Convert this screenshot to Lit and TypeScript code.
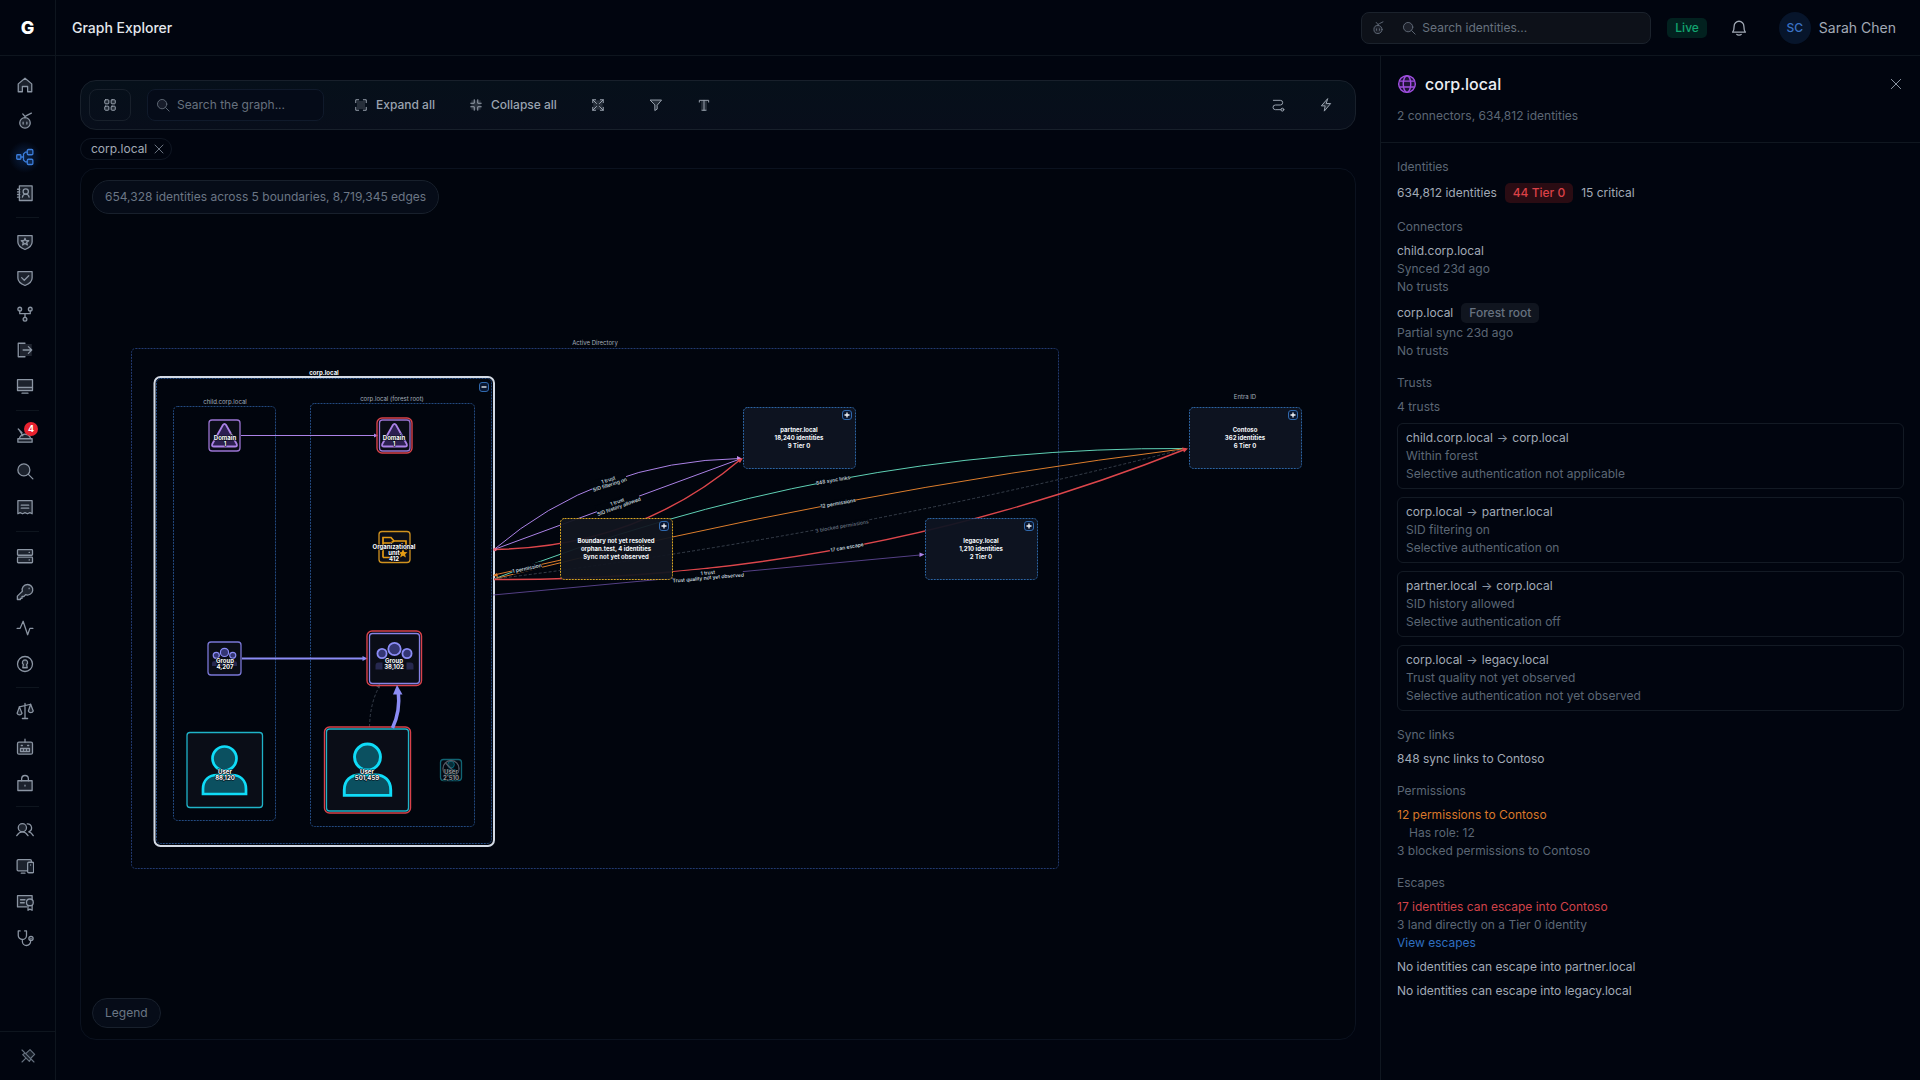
import { LitElement, html, css, svg, nothing } from "lit";
import { customElement, property } from "lit/decorators.js";

/* ---------- icon set: 24-unit grid, outline plus a soft inner tint ---------- */
const ICONS: Record<string, unknown> = {
  home: svg`<path class="t" d="M3 21V10.5L12 3l9 7.5V21h-5.5v-7h-7v7z"/>`,
  bot: svg`<circle class="t" cx="12" cy="14.5" r="7"/><path d="M12 7.5V6M9 2.5l3 3.5 2.5-1.5L20.5 1.5M9.5 13.5v2.5M14.5 13.5v2.5"/>`,
  graph: svg`<rect class="t" x="1" y="9" width="5.5" height="6" rx="1"/><rect class="t" x="15" y="2" width="7.5" height="7" rx="1.5"/><rect class="t" x="15" y="15" width="7.5" height="7" rx="1.5"/><path d="M6.5 12H10M15 5.500h-2.500L10 8v8l2.500 2.500H15"/>`,
  contacts: svg`<rect class="t" x="4.5" y="2.5" width="17" height="19.5"/><circle cx="13" cy="10" r="3.5"/><path d="M8.500 17.500c.500-2.500 2-4 4.500-4s4 1.500 4.500 4M2 7h3M2 10.500h3M2 14h3M2 17.500h3"/>`,
  shieldStar: svg`<path class="t" d="M2.500 3.500h19V12c0 5-4.500 8-9.500 10-5-2-9.500-5-9.500-10z"/><path d="m12 7 1.300 3.300H17l-2.800 2.200 1 3.500-3.200-2.200L8.800 16l1-3.500L7 10.300h3.700z"/>`,
  shieldCheck: svg`<path class="t" d="M2.500 3.500h19V12c0 5-4.500 8-9.500 10-5-2-9.500-5-9.500-10z"/><path d="m7.500 11.500 3.500 3.500 6-6"/>`,
  fork: svg`<circle class="t" cx="5" cy="5.500" r="2.500"/><circle class="t" cx="19" cy="5.500" r="2.500"/><circle class="t" cx="12" cy="19" r="2.500"/><path d="M5 8v3.500h14V8M12 11.500v5"/>`,
  exit: svg`<path d="M12 3H3v18h9"/><path class="f" d="M5 4h16v16H5z"/><path d="M9.500 12H21M16.500 7.500 21 12l-4.500 4.500"/>`,
  monitor: svg`<path class="t" d="M2 3.500h20V18H2z"/><path d="M2 14h20M8 21.500h8"/>`,
  siren: svg`<path class="t" d="M5 17V15a8 8 0 0 1 14 0v2M2.500 17h19v4.500h-19z"/><path d="M8 9 3 4M4.500 5.500 9 13"/>`,
  search: svg`<circle class="t" cx="10.500" cy="10.500" r="8"/><path d="m16.500 16.500 6 6"/>`,
  receipt: svg`<path class="t" d="M2.500 3.500h19V21l-3-1.500-3.250 1.500L12 19.500 8.750 21l-3.250-1.500-3 1.500z"/><path d="M7 9.500h10M7 13.500h10"/>`,
  server: svg`<rect class="t" x="2" y="3.500" width="20" height="7.500" rx="1"/><rect class="t" x="2" y="13.500" width="20" height="7.500" rx="1"/><path d="M17.500 7.200h.500M17.500 17.200h.500"/>`,
  key: svg`<path class="t" d="M15 2a7 7 0 1 1-2.200 13.500L10.500 18H8v2.500H6V22H1.800v-4.500L8.500 11A7 7 0 0 1 15 2z"/><path d="M17.500 7v.500"/>`,
  pulse: svg`<path d="M1.500 12.500h4L9.500 3l6 18 3-8.500h4"/>`,
  keyhole: svg`<circle cx="12" cy="12" r="10"/><path class="t" d="M12 6.500a3.500 3.500 0 0 1 2.200 6.200L15 17H9l.8-4.300A3.500 3.500 0 0 1 12 6.500z"/>`,
  scales: svg`<path d="M12 2v20M8.500 22h7M4.500 6.500 19.500 3"/><path class="t" d="M4.500 6.500 1.500 15a3.500 3.500 0 0 0 6.500 0zM19.500 3l-3 9a3.500 3.500 0 0 0 6.500 0z"/>`,
  robot: svg`<rect class="t" x="2" y="5.500" width="20" height="16" rx="2"/><path d="M12 5.500V1.500M7 10h1.500M15.500 10H17M6 14h12v4H6zM10 14v4M14 14v4"/>`,
  lock: svg`<rect class="t" x="2.500" y="9" width="19" height="13"/><path d="M7.500 9V6.500a4.500 4.500 0 0 1 9 0V9M12 15v1"/>`,
  users: svg`<circle class="t" cx="8.500" cy="9" r="5.500"/><path d="M1 19.500c2-3 4.500-5 7.500-5s5.500 2 7.500 5M15 3.800a5.500 5.500 0 0 1 2 10.700c2.500.500 4.500 2.500 6 5"/>`,
  devices: svg`<rect class="t" x="1.500" y="3.500" width="19" height="15" rx="1.500"/><path d="M7 21.500h5"/><rect class="k" x="15.500" y="7" width="8" height="14" rx="1.500"/><path d="M19.500 10.500v.200"/>`,
  certificate: svg`<path class="t" d="M14 18.500H2v-15h19.500V8"/><circle class="k" cx="18.500" cy="12.500" r="4.500"/><path d="M16 16.500V23l2.500-1.500L21.500 23v-6.500M6 9h6M6 13h5"/>`,
  steth: svg`<path d="M5.500 2.500H3v6a5.500 5.500 0 0 0 11 0v-6h-2.500M8.500 14v2.500a5.500 5.500 0 0 0 11 0V15"/><circle class="t" cx="20" cy="12.500" r="2.800"/><path d="M20 12.400v.200"/>`,
  pinOff: svg`<path class="t" d="m9 8 6-5.500 7 7L16.500 15M7 8l-3 2 10 10 2-3"/><path d="M3 3l18 18M8.500 15.500 3 21"/>`,
  bell: svg`<path d="M3.500 17.500c1.500-2 2-4 2-8a6.500 6.500 0 0 1 13 0c0 4 .500 6 2 8z"/><path d="M9 20.500c1 1.200 5 1.200 6 0"/>`,
  grid: svg`<rect class="t" x="3" y="3" width="7" height="7" rx="1.500"/><rect class="t" x="14" y="3" width="7" height="7" rx="1.500"/><rect class="t" x="3" y="14" width="7" height="7" rx="1.500"/><rect class="t" x="14" y="14" width="7" height="7" rx="1.500"/>`,
  expand: svg`<path class="f" d="M5 5h14v14H5z"/><path d="M3 8V3h5M16 3h5v5M21 16v5h-5M8 21H3v-5"/>`,
  collapse: svg`<path class="f" d="M4 4h16v16H4z"/><path d="M9 3v6H3M15 3v6h6M21 15h-6v6M3 15h6v6"/>`,
  fit: svg`<path class="f" d="M4 4h16v16H4z"/><path d="M3 8V3h5M16 3h5v5M21 16v5h-5M8 21H3v-5M3 3l6.500 6.500M21 3l-6.500 6.500M21 21l-6.500-6.500M3 21l6.500-6.500"/>`,
  filter: svg`<path class="t" d="M2.500 3.500h19L14 12.500V19l-4 2.500v-9z"/>`,
  type: svg`<path class="f" d="M7 4h10v17H7z"/><path d="M4 7V4h16v3M12 4v17M8.500 21h7"/>`,
  route: svg`<path d="M4 4h12a4 4 0 0 1 0 8H7.500a4 4 0 0 0 0 8H17"/><circle class="t" cx="19.500" cy="20" r="2.500"/>`,
  bolt: svg`<path class="t" d="M14.500 1.500 4 13.500h6.500l-1.500 9 11-13H13z"/>`,
  close: svg`<path d="M4 4l16 16M20 4 4 20"/>`,
  globe: svg`<circle class="t" cx="12" cy="12" r="10"/><ellipse cx="12" cy="12" rx="4.500" ry="10"/><path d="M3.500 8.500h17M3.500 15.500h17"/>`,
};

@customElement("ui-icon")
export class UiIcon extends LitElement {
  @property() name = "";
  @property({ type: Number }) size = 18;
  static styles = css`
    :host { display: inline-flex; flex: none; }
    svg { display: block; fill: none; stroke: currentColor; stroke-width: 1.7; stroke-linecap: round; stroke-linejoin: round; }
    .t { fill: currentColor; fill-opacity: 0.2; }
    .f { fill: currentColor; fill-opacity: 0.22; stroke: none; }
    .k { fill: #151c28; }
  `;
  render() {
    return html`<svg width=${this.size} height=${this.size} viewBox="0 0 24 24" aria-hidden="true">${ICONS[this.name] ?? nothing}</svg>`;
  }
}

/* ---------- navigation rail ---------- */
const NAV: { tight?: boolean; items: [string, string][] }[] = [
  { items: [["home", "Home"], ["bot", "Assistant"], ["graph", "Graph Explorer"], ["contacts", "Identities"]] },
  { items: [["shieldStar", "Tier 0"], ["shieldCheck", "Posture"], ["fork", "Attack paths"], ["exit", "Escapes"], ["monitor", "Hosts"]] },
  { items: [["siren", "Alerts"], ["search", "Hunt"], ["receipt", "Reports"]] },
  { items: [["server", "Connectors"], ["key", "Credentials"], ["pulse", "Activity"], ["keyhole", "Access"]] },
  { tight: true, items: [["scales", "Policies"], ["robot", "Automation"], ["lock", "Secrets"]] },
  { tight: true, items: [["users", "Users"], ["devices", "Devices"], ["certificate", "Licences"], ["steth", "Health"]] },
];

@customElement("nav-rail")
export class NavRail extends LitElement {
  static styles = css`
    :host { display: flex; flex-direction: column; border-right: 1px solid #0e151e; box-sizing: border-box; }
    nav { flex: 1; padding: 13px 8px 8px; }
    ul { list-style: none; margin: 0; padding: 0; display: flex; flex-direction: column; gap: 4px; }
    .sep { border: 0; height: 1px; background: #0e151e; margin: 8px; }
    .sep.tight { margin: 7px 8px; }
    a { display: flex; align-items: center; height: 32px; padding: 0 8px; color: #8b95a3; border-radius: 6px; position: relative; }
    a.on { color: #3b7ddb; background: radial-gradient(circle at 17px 16px, #0a2145 0, #04102400 16px); }
    .badge { position: absolute; left: 16px; top: 3px; width: 14px; height: 14px; border-radius: 7px; background: #e7222f; color: #fff; font-size: 9px; font-weight: 700; line-height: 14px; text-align: center; }
    .foot { height: 48px; border-top: 1px solid #0e151e; display: flex; align-items: center; justify-content: center; }
    button { all: unset; color: #66717f; display: flex; }
  `;
  render() {
    return html`
      <nav aria-label="Main">
        ${NAV.map((g, i) => html`
          ${i ? html`<hr class="sep ${g.tight ? "tight" : ""}" />` : nothing}
          <ul>
            ${g.items.map(([icon, label]) => html`<li>
              <a href="#${icon}" aria-label=${label} class=${icon === "graph" ? "on" : ""}>
                <ui-icon name=${icon}></ui-icon>
                ${icon === "siren" ? html`<span class="badge">4</span>` : nothing}
              </a></li>`)}
          </ul>`)}
      </nav>
      <div class="foot"><button aria-label="Pin sidebar"><ui-icon name="pinOff" size="16"></ui-icon></button></div>
    `;
  }
}

/* ---------- graph canvas ---------- */
interface Boundary { x: number; y: number; lines: string[]; warn?: boolean }
const BOUNDARIES: Boundary[] = [
  { x: 743, y: 407, lines: ["partner.local", "18,240 identities", "9 Tier 0"] },
  { x: 560, y: 518, lines: ["Boundary not yet resolved", "orphan.test, 4 identities", "Sync not yet observed"], warn: true },
  { x: 1189, y: 407, lines: ["Contoso", "362 identities", "6 Tier 0"] },
  { x: 925, y: 518, lines: ["legacy.local", "1,210 identities", "2 Tier 0"] },
];

interface EdgeLabel { x: number; y: number; r: number; lines: string[]; w: number; dim?: boolean }
const EDGE_LABELS: EdgeLabel[] = [
  { x: 609, y: 482, r: -18, lines: ["1 trust", "SID filtering on"], w: 36 },
  { x: 618, y: 504, r: -20, lines: ["1 trust", "SID history allowed"], w: 45 },
  { x: 527, y: 568, r: -12, lines: ["1 permission"], w: 30 },
  { x: 833, y: 480, r: -10, lines: ["848 sync links"], w: 34 },
  { x: 838, y: 503, r: -10, lines: ["12 permissions"], w: 35 },
  { x: 842, y: 526, r: -10, lines: ["3 blocked permissions"], w: 52, dim: true },
  { x: 847, y: 547, r: -10, lines: ["17 can escape"], w: 35 },
  { x: 708, y: 575, r: -5, lines: ["1 trust", "Trust quality not yet observed"], w: 70 },
];

@customElement("graph-canvas")
export class GraphCanvas extends LitElement {
  static styles = css`
    :host { display: flex; flex-direction: column; justify-content: space-between; align-items: flex-start; position: relative; box-sizing: border-box; min-height: 480px; padding: 11px; border: 1px solid #0b121f; border-radius: 16px; background: #01050d; overflow: hidden; }
    .stage { position: absolute; inset: 0; width: 100%; height: 100%; font-family: Inter, "Liberation Sans", sans-serif; }
    .pill { position: relative; font: 400 12px/18px Inter, "Liberation Sans", sans-serif; color: #6b7685; background: #060c18; border: 1px solid #18202c; border-radius: 17px; padding: 7px 12px; margin: 0; }
    button.pill { padding: 5px 12px; border-radius: 15px; cursor: pointer; }
    text { text-anchor: middle; dominant-baseline: central; font-size: 6px; }
    .cap { fill: #a3adbb; }
    .strong { fill: #f4f7fb; font-weight: 700; }
    .node { fill: #fbfcfe; font-weight: 700; paint-order: stroke; stroke: #050910; stroke-width: 1.2px; stroke-linejoin: round; }
    .edge-label { font-size: 5px; font-weight: 500; fill: #dfe4ec; }
    .edge-label.dim { fill: #6b7583; }
    .lb { fill: #01050d; }
    .dash { fill: none; stroke: #234a80; stroke-width: 1; stroke-dasharray: 2 1; }
    .dash.far { stroke: #223a70; }
    .box { fill: #0e1422; fill-opacity: 0.94; stroke: #2c64a2; stroke-width: 1; stroke-dasharray: 2 1; }
    .box.warn { stroke: #d6a422; fill: #111520; }
    .e { fill: none; stroke-width: 1; }
    .violet { stroke: #ab82e6; } .violet.thin { stroke: #6a4fa5; stroke-width: 0.8; }
    .indigo { stroke: #8b8cf5; }
    .indigo.wide { stroke-width: 2; }
    .red { stroke: #dc464b; stroke-width: 1.4; }
    .teal { stroke: #5fd0b4; }
    .orange { stroke: #dc7d2c; }
    .grey { stroke: #424b58; stroke-dasharray: 3 2; stroke-width: 0.8; }
    .card { fill: #0a0d17; stroke-width: 1.3; }
    .ring { fill: none; stroke: #d8424a; stroke-width: 1.4; }
    .toggle { all: unset; box-sizing: border-box; display: block; width: 10px; height: 10px; border: 1px solid #3069ad; border-radius: 3px; background: #0a1730; cursor: pointer; }
    .toggle svg { display: block; width: 8px; height: 8px; stroke: #f4f7fb; stroke-width: 1.3; }
  `;

  private toggle(x: number, y: number, label: string, open = false) {
    return svg`<foreignObject x=${x} y=${y} width="10" height="10">
      <button class="toggle" xmlns="http://www.w3.org/1999/xhtml" aria-label=${label}>
        <svg viewBox="0 0 8 8" xmlns="http://www.w3.org/2000/svg"><path d=${open ? "M1.500 4h5" : "M1.500 4h5M4 1.500v5"}/></svg>
      </button></foreignObject>`;
  }

  private boundary(b: Boundary) {
    return svg`<rect class="box ${b.warn ? "warn" : ""}" x=${b.x + 0.5} y=${b.y + 0.5} width="112" height="61" rx="4"/>
      ${b.lines.map((t, i) => svg`<text class="strong" x=${b.x + 56} y=${b.y + 22 + i * 8}>${t}</text>`)}
      ${this.toggle(b.x + 99, b.y + 3, `Expand ${b.lines[0]}`)}`;
  }

  private edgeLabel(l: EdgeLabel) {
    const n = l.lines.length;
    return svg`<g transform="rotate(${l.r} ${l.x} ${l.y})">
      <rect class="lb" x=${l.x - l.w / 2} y=${l.y - n * 2.5 - 1} width=${l.w} height=${n * 5 + 2}/>
      ${l.lines.map((t, i) => svg`<text class="edge-label ${l.dim ? "dim" : ""}" x=${l.x} y=${l.y - (n - 1) * 2.5 + i * 5}>${t}</text>`)}
    </g>`;
  }

  private labels(x: number, y: number, lines: string[]) {
    return lines.map((t, i) => svg`<text class="node" x=${x} y=${y + i * 6}>${t}</text>`);
  }

  private triangle(x: number, y: number) {
    return svg`<path d="M${x - 1.6} ${y - 10.5}q1.600 -2.400 3.200 0L${x + 12.2} ${y + 8.5}q1 2.500 -1.700 2.500H${x - 10.5}q-2.700 0 -1.700 -2.500z" fill="#2c2050" stroke="#ab82e6" stroke-width="1.800"/>`;
  }

  private person(x: number, y: number, k: number) {
    return svg`<g transform="translate(${x} ${y}) scale(${k})" fill="#0b5060" stroke="#0fdcf8" stroke-width="2.700">
      <circle cx="0" cy="-12" r="12"/><path d="M-21.500 23.500v-5c0-9 6-14 14-14h15c8 0 14 5 14 14v5z"/></g>`;
  }

  private crowd(x: number, y: number, k: number) {
    return svg`<g transform="translate(${x} ${y}) scale(${k})">
      <path d="M-19 12v-4q0-3 3-3h4v7zM19 12v-4q0-3-3-3h-4v7zM-9 12V9q0-5 5-5h8q5 0 5 5v3z" fill="#26284f"/>
      <g fill="#343673" stroke="#8b8cf5" stroke-width="1.800"><circle cx="-12.500" cy="-4" r="4.600"/><circle cx="12.500" cy="-4" r="4.600"/><circle cx="0" cy="-8.500" r="6.200"/></g></g>`;
  }

  render() {
    return html`
      <svg class="stage" viewBox="81 169 1274 870" role="img" aria-label="Identity graph">
        <rect class="dash far" x="131.500" y="348.500" width="927" height="520" rx="4"/>
        <text class="cap" x="595" y="342">Active Directory</text>
        <text class="cap" x="1245" y="396">Entra ID</text>

        <rect x="154.500" y="377" width="339.500" height="469" rx="6" fill="none" stroke="#d3dae4" stroke-width="2"/>
        <rect class="dash" x="156.500" y="378.500" width="335" height="465" rx="4"/>
        <text class="strong" x="324" y="372">corp.local</text>
        <rect class="dash" x="173.500" y="406.500" width="102" height="414" rx="4"/>
        <text class="cap" x="225" y="401">child.corp.local</text>
        <rect class="dash" x="310.500" y="403.500" width="164" height="423" rx="4"/>
        <text class="cap" x="392" y="398">corp.local (forest root)</text>
        ${this.toggle(479, 382, "Collapse corp.local", true)}

        <path class="e violet" d="M494 549.500Q598 461 740 458.500"/>
        <path class="e violet" d="M494 549.500L740 459"/>
        <path class="e red" d="M494 549.500Q638 547 741 459"/>
        <path class="e teal" d="M494 579Q829 446.500 1186 448.500"/>
        <path class="e orange" d="M494 579Q837 492.500 1186 448.500"/>
        <path class="e orange" d="M494 575L561 560"/>
        <path class="e grey" d="M494 579Q845 536 1186 448.500"/>
        <path class="e red" d="M494 579.500Q853 581 1186 449"/>
        <path class="e violet thin" d="M493 595L920 555"/>
        <path d="M742 458.500l-5-2.500v4z" fill="#c489e8"/>
        <path d="M743 458l-6 1.500 3 3.500z" fill="#e0484e"/>
        <path d="M1188 448.500l-6-1 2 5z" fill="#e0484e"/>
        <path d="M924.500 554.500l-5-2v4.500z" fill="#ab82e6"/>
        <circle cx="495" cy="549.500" r="1.800" fill="#e5687e"/>
        <path d="M493 575.500l4-2.500 1 4z" fill="#e08030"/>
        ${EDGE_LABELS.map((l) => this.edgeLabel(l))}
        ${BOUNDARIES.map((b) => this.boundary(b))}

        <path class="e violet" d="M241 435.500H374"/>
        <path d="M378 435.500l-4-2v4z" fill="#ab82e6"/>
        <path class="e indigo wide" d="M242 658.500H363"/>
        <path d="M367.500 658.500l-5-2.500v5z" fill="#8b8cf5"/>
        <path class="e grey" d="M369.500 727Q370 703 379.500 686"/>
        <path d="M380 684l-4 2 3.500 2.500z" fill="#424b58"/>

        <rect class="card" x="209" y="420" width="31" height="31" rx="3" stroke="#9a74d2"/>
        ${this.triangle(224.5, 435.5)}${this.labels(225, 437, ["Domain", "1"])}
        <rect class="ring" x="377" y="418" width="35" height="35" rx="5"/>
        <rect class="card" x="379.500" y="420" width="30.500" height="31" rx="3" stroke="#9a74d2"/>
        ${this.triangle(394.5, 435.5)}${this.labels(394, 437, ["Domain", "1"])}

        <rect class="card" x="379" y="531.500" width="31" height="31" rx="3" stroke="#d0921f"/>
        <path d="M383 557.500v-20h8l3 3.500h12v9M383 557.500h15M383 543h8l3-2" fill="none" stroke="#e39a14" stroke-width="1.700"/>
        <path d="m403 549 1.300 3 3.200.3-2.400 2 .8 3.200-2.900-1.700-2.900 1.700.8-3.200-2.400-2 3.200-.3z" fill="#e39a14"/>
        ${this.labels(394, 546, ["Organizational", "unit", "412"])}

        <rect class="card" x="208" y="642" width="33" height="33" rx="3" stroke="#7a77d6"/>
        ${this.crowd(224.5, 658, 0.66)}${this.labels(225, 660, ["Group", "4,207"])}
        <rect class="ring" x="367" y="631" width="54.500" height="54.500" rx="5"/>
        <rect class="card" x="369.500" y="633.500" width="50" height="50" rx="3" stroke="#8683e6"/>
        ${this.crowd(394.5, 657.5, 1)}${this.labels(394, 660, ["Group", "38,102"])}

        <rect class="card" x="187" y="732.500" width="75.500" height="75" rx="3" stroke="#1fb3c8"/>
        ${this.person(224.5, 770.5, 1)}${this.labels(225, 771, ["User", "88,120"])}
        <rect class="ring" x="324.500" y="727" width="86" height="86" rx="5"/>
        <rect class="card" x="326.500" y="729" width="82" height="82" rx="3" stroke="#1fb3c8"/>
        ${this.person(367.5, 770, 1.08)}${this.labels(367, 771, ["User", "501,459"])}
        <path d="M392.500 728Q400.500 711 398.300 692" fill="none" stroke="#8b8cf5" stroke-width="3.500"/>
        <path d="M397 685l-4 9.500h9.500z" fill="#8b8cf5"/>

        <g opacity="0.550">
          <rect class="card" x="440.500" y="759.500" width="21" height="21" rx="3" stroke="#1fb3c8"/>
          ${this.person(451, 768, 0.28)}
          <circle cx="451" cy="768.500" r="8" fill="none" stroke="#9aa3b0" stroke-width="1.300"/>
          <path d="M445.500 763l11 11" stroke="#9aa3b0" stroke-width="1.300"/>
          ${this.labels(451, 771, ["User", "2,510"])}
        </g>
      </svg>
      <p class="pill">654,328 identities across 5 boundaries, 8,719,345 edges</p>
      <button class="pill">Legend</button>
    `;
  }
}

/* ---------- detail panel ---------- */
const TRUSTS = [
  ["child.corp.local", "corp.local", "Within forest", "Selective authentication not applicable"],
  ["corp.local", "partner.local", "SID filtering on", "Selective authentication on"],
  ["partner.local", "corp.local", "SID history allowed", "Selective authentication off"],
  ["corp.local", "legacy.local", "Trust quality not yet observed", "Selective authentication not yet observed"],
];

@customElement("detail-panel")
export class DetailPanel extends LitElement {
  static styles = css`
    :host { display: block; box-sizing: border-box; border-left: 1px solid #101720; font-size: 12px; line-height: 18px; color: #a2aab6; }
    header { padding: 16px 15px 16px 16px; height: 87px; box-sizing: border-box; border-bottom: 1px solid #101720; }
    .title { display: flex; align-items: center; gap: 8px; height: 24px; color: #a04fe0; }
    h2 { margin: 0; flex: 1; font-size: 16px; line-height: 24px; font-weight: 500; color: #eceff4; }
    button { all: unset; display: flex; color: #8b95a3; padding: 2px; cursor: pointer; }
    p { margin: 0; }
    .sub { margin-top: 11px; }
    .sub, .m { color: #5c6775; }
    .body { padding: 15px 16px; display: flex; flex-direction: column; gap: 14px; }
    section { display: flex; flex-direction: column; gap: 6px; }
    h3 { margin: 0; font-size: 12px; line-height: 18px; font-weight: 400; color: #5c6775; }
    .row { display: flex; align-items: center; gap: 8px; height: 22px; }
    .tag { line-height: 20px; padding: 0 8px; border-radius: 5px; font-weight: 500; background: #10151f; color: #677280; }
    .tag.danger { background: #2a0c13; color: #dc4147; }
    ul { list-style: none; margin: 1px 0; padding: 0; display: flex; flex-direction: column; gap: 8px; }
    li { border: 1px solid #131a24; border-radius: 6px; padding: 5px 8px; }
    .pair { display: flex; gap: 4px; }
    .warn { color: #d9782a; }
    .bad { color: #d1434a; }
    .indent { padding-left: 12px; }
    a { color: #2f6fc0; text-decoration: none; }
    .arrow { color: #8b95a3; }
  `;
  render() {
    return html`
      <header>
        <div class="title"><ui-icon name="globe" size="20"></ui-icon><h2>corp.local</h2>
          <button aria-label="Close panel"><ui-icon name="close" size="14"></ui-icon></button></div>
        <p class="sub">2 connectors, 634,812 identities</p>
      </header>
      <div class="body">
        <section><h3>Identities</h3>
          <div class="row"><span>634,812 identities</span><span class="tag danger">44 Tier 0</span><span>15 critical</span></div>
        </section>
        <section><h3>Connectors</h3>
          <div><p>child.corp.local</p><p class="m">Synced 23d ago</p><p class="m">No trusts</p></div>
          <div><div class="row"><span>corp.local</span><span class="tag">Forest root</span></div><p class="m">Partial sync 23d ago</p><p class="m">No trusts</p></div>
        </section>
        <section><h3>Trusts</h3><p class="m">4 trusts</p>
          <ul>${TRUSTS.map(([a, b, q, s]) => html`<li><p class="pair"><span>${a}</span><span class="arrow">→</span><span>${b}</span></p><p class="m">${q}</p><p class="m">${s}</p></li>`)}</ul>
        </section>
        <section><h3>Sync links</h3><p>848 sync links to Contoso</p></section>
        <section><h3>Permissions</h3>
          <div><p class="warn">12 permissions to Contoso</p><p class="m indent">Has role: 12</p><p class="m">3 blocked permissions to Contoso</p></div>
        </section>
        <section><h3>Escapes</h3>
          <div><p class="bad">17 identities can escape into Contoso</p><p class="m">3 land directly on a Tier 0 identity</p><p><a href="#escapes">View escapes</a></p></div>
          <p>No identities can escape into partner.local</p>
          <p>No identities can escape into legacy.local</p>
        </section>
      </div>
    `;
  }
}

/* ---------- shell ---------- */
@customElement("app-root")
export class AppRoot extends LitElement {
  static styles = css`
    :host { display: grid; grid-template: 56px minmax(0, 1fr) / 56px minmax(0, 1fr); min-height: 100vh; background: #01050f; color: #a2aab6; font: 400 12px/18px Inter, "Liberation Sans", sans-serif; }
    button { all: unset; box-sizing: border-box; display: flex; align-items: center; cursor: pointer; }
    .logo { display: grid; place-items: center; border-right: 1px solid #0e151e; border-bottom: 1px solid #0e151e; font-size: 18px; font-weight: 800; color: #fff; }
    .top { display: flex; align-items: center; gap: 16px; padding: 0 24px 0 16px; border-bottom: 1px solid #0e151e; }
    h1 { flex: 1; margin: 0; font-size: 14px; line-height: 20px; font-weight: 500; color: #e3e7ec; }
    .find { display: flex; align-items: center; box-sizing: border-box; border: 1px solid #1b222c; border-radius: 8px; height: 32px; color: #5d6673; }
    .find input { all: unset; flex: 1; min-width: 0; font: inherit; color: #a2aab6; }
    .find input::placeholder { color: #67717e; opacity: 1; }
    .find.global { width: 290px; background: #0d1119; padding: 0 9px; gap: 6px; }
    .find.global ui-icon + label { margin-left: 11px; }
    .find label { display: flex; }
    .live { line-height: 20px; padding: 0 8px; border-radius: 5px; font-weight: 500; background: #02211f; color: #12a56f; }
    .bell { padding: 0 7px; color: #a2aab6; }
    .me { gap: 8px; font-size: 14px; line-height: 20px; margin-left: 8px; }
    .avatar { width: 32px; height: 32px; border-radius: 16px; background: #07152b; color: #3a72c4; font-size: 12px; line-height: 32px; text-align: center; font-weight: 500; }
    .body { display: grid; grid-template-columns: minmax(0, 1fr) 540px; }
    main { display: flex; flex-direction: column; gap: 8px; padding: 24px 24px 40px; }
    .bar { display: flex; align-items: center; gap: 16px; padding: 8px; border: 1px solid #18202b; border-radius: 16px; background: linear-gradient(#06101a, #080e1b); }
    .set { display: flex; gap: 6px; }
    .set.end { margin-left: auto; }
    .tool { height: 32px; gap: 8px; padding: 0 14px; border-radius: 8px; font-weight: 500; color: #9aa3af; }
    .tool.boxed { border: 1px solid #18202b; padding: 0 13px; }
    .find.local { width: 177px; background: #050b18; border-color: #101a2b; padding: 0 8px; gap: 7px; }
    .chip { align-self: flex-start; display: flex; align-items: center; gap: 6px; box-sizing: border-box; height: 22px; padding: 0 6px 0 10px; border: 1px solid #0f1622; border-radius: 11px; }
    .chip button { color: #7d8794; }
    graph-canvas { flex: 1; }
  `;
  render() {
    return html`
      <div class="logo">G</div>
      <header class="top">
        <h1>Graph Explorer</h1>
        <div class="find global">
          <ui-icon name="bot" size="14"></ui-icon>
          <label for="q"><ui-icon name="search" size="14"></ui-icon></label>
          <input id="q" type="text" aria-label="Search identities" placeholder="Search identities..." />
        </div>
        <span class="live">Live</span>
        <button class="bell" aria-label="Notifications"><ui-icon name="bell" size="18"></ui-icon></button>
        <button class="me"><span class="avatar">SC</span><span>Sarah Chen</span></button>
      </header>
      <nav-rail></nav-rail>
      <div class="body">
        <main>
          <div class="bar" role="toolbar" aria-label="Graph tools">
            <button class="tool boxed" aria-label="Layout"><ui-icon name="grid" size="14"></ui-icon></button>
            <div class="find local">
              <label for="g"><ui-icon name="search" size="14"></ui-icon></label>
              <input id="g" type="text" aria-label="Search the graph" placeholder="Search the graph..." />
            </div>
            <div class="set">
              <button class="tool"><ui-icon name="expand" size="14"></ui-icon>Expand all</button>
              <button class="tool"><ui-icon name="collapse" size="14"></ui-icon>Collapse all</button>
              <button class="tool" aria-label="Fit to screen"><ui-icon name="fit" size="14"></ui-icon></button>
            </div>
            <div class="set">
              <button class="tool" aria-label="Filter"><ui-icon name="filter" size="14"></ui-icon></button>
              <button class="tool" aria-label="Labels"><ui-icon name="type" size="14"></ui-icon></button>
            </div>
            <div class="set end">
              <button class="tool" aria-label="Find path"><ui-icon name="route" size="14"></ui-icon></button>
              <button class="tool" aria-label="Quick actions"><ui-icon name="bolt" size="14"></ui-icon></button>
            </div>
          </div>
          <span class="chip">corp.local<button aria-label="Remove corp.local"><ui-icon name="close" size="12"></ui-icon></button></span>
          <graph-canvas></graph-canvas>
        </main>
        <detail-panel></detail-panel>
      </div>
    `;
  }
}
